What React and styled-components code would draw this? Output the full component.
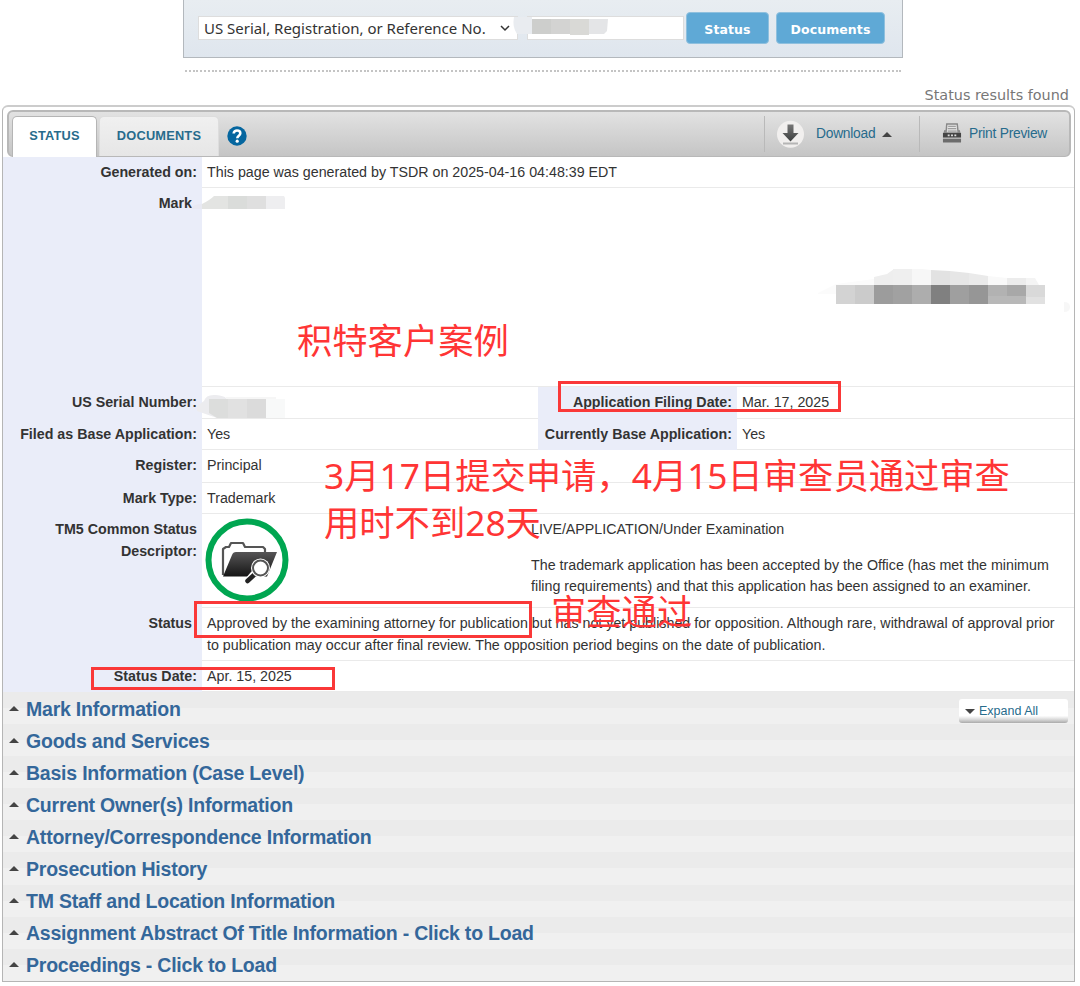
import React from 'react'
import styled, {createGlobalStyle} from 'styled-components'

const sections = [
    'Mark Information',
    'Goods and Services',
    'Basis Information (Case Level)',
    'Current Owner(s) Information',
    'Attorney/Correspondence Information',
    'Prosecution History',
    'TM Staff and Location Information',
    'Assignment Abstract Of Title Information - Click to Load',
    'Proceedings - Click to Load',
]

const App = () => {
    return (
        <Page>
            <GlobalStyle />
            <SearchBar>
                <Select>
                    <span>US Serial, Registration, or Reference No.</span>
                    <Chevron />
                </Select>
                <NumberInput />
                <SearchButton $width={83}>Status</SearchButton>
                <SearchButton $width={109} $gap={7}>Documents</SearchButton>
                <SearchMask />
            </SearchBar>
            <Dots />
            <Found>Status results found</Found>
            <Panel>
                <Toolbar>
                    <Tab $active>STATUS</Tab>
                    <Tab>DOCUMENTS</Tab>
                    <HelpIcon />
                    <Tools>
                        <Tool $width={155} $inset={13}>
                            <DownloadIcon />
                            <ToolText $gap={11}>Download</ToolText>
                            <Arrow $size={5} />
                        </Tool>
                        <Tool $width={150} $inset={23}>
                            <PrinterIcon />
                            <ToolText $gap={7}>Print Preview</ToolText>
                        </Tool>
                    </Tools>
                </Toolbar>
                <Row $height={31}>
                    <Label>Generated on:</Label>
                    <Value>This page was generated by TSDR on 2025-04-16 04:48:39 EDT</Value>
                </Row>
                <Row $height={199}>
                    <Label $cut>Mark</Label>
                    <Value />
                </Row>
                <Row $height={32} $split>
                    <Label>US Serial Number:</Label>
                    <Value />
                    <Label>Application Filing Date:</Label>
                    <Value>Mar. 17, 2025</Value>
                </Row>
                <Row $height={31} $split>
                    <Label>Filed as Base Application:</Label>
                    <Value>Yes</Value>
                    <Label>Currently Base Application:</Label>
                    <Value>Yes</Value>
                </Row>
                <Row $height={33}>
                    <Label>Register:</Label>
                    <Value>Principal</Value>
                </Row>
                <Row $height={31}>
                    <Label>Mark Type:</Label>
                    <Value>Trademark</Value>
                </Row>
                <Row $height={94}>
                    <Label>TM5 Common Status Descriptor:</Label>
                    <Descriptor>
                        <FolderIcon />
                        <DescriptorText>
                            <p>LIVE/APPLICATION/Under Examination</p>
                            <p>The trademark application has been accepted by the Office (has met the minimum<br />filing requirements) and that this application has been assigned to an examiner.</p>
                        </DescriptorText>
                    </Descriptor>
                </Row>
                <Row $height={53}>
                    <Label $cut>Status</Label>
                    <Value>Approved by the examining attorney for publication but has not yet published for opposition. Although rare, withdrawal of approval prior<br />to publication may occur after final review. The opposition period begins on the date of publication.</Value>
                </Row>
                <Row $height={31}>
                    <Label>Status Date:</Label>
                    <Value>Apr. 15, 2025</Value>
                </Row>
                <Sections>
                    {sections.map((title, i) => (
                        <Section key={title}>
                            <Arrow $size={5} />
                            <h2>{title}</h2>
                            {i === 0 && <ExpandAll><Arrow $down $size={5} />Expand All</ExpandAll>}
                        </Section>
                    ))}
                </Sections>
            </Panel>
            <MarkMask />
            <SerialMask />
            <ImageMask />
            <Frame $x={558} $y={381} $w={283} $h={31} />
            <Frame $x={194} $y={601} $w={338} $h={37} />
            <Frame $x={91} $y={667} $w={244} $h={23} />
            <Note $x={297} $y={317}>积特客户案例</Note>
            <Note $x={324} $y={452}>3月17日提交申请，4月15日审查员通过审查<br />用时不到28天</Note>
            <Note $x={551} $y={588}>审查通过</Note>
        </Page>
    )
}

export default App

const Chevron = () => (
    <svg width="10" height="8" viewBox="0 0 10 8" fill="none" stroke="#333" strokeWidth="1.5">
        <path d="M1 2l4 4 4-4" />
    </svg>
)

const HelpIcon = () => (
    <HelpSvg width="20" height="20" viewBox="0 0 20 20">
        <circle cx="10" cy="10" r="9.7" fill="#05669f" />
        <path d="M6.7 7.6C6.7 3.4 13.3 3.7 13.3 7.3C13.3 9.8 10.3 9.6 10.3 12.2" fill="none" stroke="#fff" strokeWidth="2.6" />
        <circle cx="10.2" cy="15.2" r="1.6" fill="#fff" />
    </HelpSvg>
)

const DownloadIcon = () => (
    <svg width="28" height="28" viewBox="0 0 28 28">
        <defs>
            <linearGradient id="down" x1="0" y1="0" x2="0" y2="1">
                <stop offset="0" stopColor="#777" />
                <stop offset="1" stopColor="#3c3f3f" />
            </linearGradient>
        </defs>
        <circle cx="13.5" cy="14.3" r="13.5" fill="#f1efee" />
        <path d="M10.5 4.500h6v8.500h5L13.500 21.500 5.500 13h5z" fill="url(#down)" />
        <path d="M6 23.500h15" stroke="#b5b5b5" strokeWidth="2" />
    </svg>
)

const PrinterIcon = () => (
    <PrinterSvg width="20" height="21" viewBox="0 0 21 21">
        <path d="M4.200 11L5 1.500h11L17 11z" fill="#e4e4e4" stroke="#888" strokeWidth="1.500" />
        <path d="M6.500 4h8M6 6.500h9M6 9h9.500" stroke="#888" strokeWidth="1" />
        <path d="M1 12l1.500-4H4v4zM20 12l-1.500-4H17v4z" fill="#888" />
        <path d="M1 11h19v5H1z" fill="#444" />
        <path d="M6 12.500h2v2H6zM9.500 12.500h2v2h-2zM13 12.500h2v2h-2z" fill="#ddd" />
        <path d="M1 16h19v1H1z" fill="#ccc" />
        <path d="M1 17h19v4H1z" fill="#6c6c6c" />
    </PrinterSvg>
)

const FolderIcon = () => (
    <FolderSvg width="84" height="84" viewBox="0 0 84 84">
        <defs>
            <linearGradient id="folder" x1="0" y1="0" x2="0" y2="1">
                <stop offset="0" stopColor="#565556" />
                <stop offset="1" stopColor="#151515" />
            </linearGradient>
        </defs>
        <circle cx="42" cy="42" r="38.500" fill="#fff" stroke="#00a651" strokeWidth="6" />
        <path d="M18 57V31l3-2h3l2-4h12l2 4h18l2 2v3" fill="none" stroke="#555" strokeWidth="2.200" strokeLinejoin="round" />
        <path d="M18 58.500L27 37Q28 34 31 34H72L62 58.500z" fill="url(#folder)" />
        <path d="M48 57L42.500 63.500" stroke="#fff" strokeWidth="7" strokeLinecap="round" />
        <path d="M49 57L42.500 63" stroke="#222" strokeWidth="4.500" strokeLinecap="round" />
        <circle cx="55.500" cy="50" r="9.500" fill="#fff" />
        <circle cx="55.500" cy="50" r="7.500" fill="#fff" stroke="#555" strokeWidth="2" />
    </FolderSvg>
)

// pixelated blocks over the private values
const SearchMask = () => (
    <Mask $x={512} $y={16} width="102" height="20" viewBox="0 0 102 20">
        <path d="M2 1H20V18H5Q0 11 2 1z" fill="#e9ecf0" />
        <path d="M20 3h19v15H20z" fill="#cdcecc" />
        <path d="M39 3h19v15H39z" fill="#d3d3d2" />
        <path d="M58 3h19v16H58z" fill="#d9d9d6" />
        <path d="M77 3h19l-1 12-3 3H77z" fill="#e4e5e7" />
    </Mask>
)

const MarkMask = () => (
    <Mask $x={191} $y={195} width="95" height="15" viewBox="0 0 95 15">
        <path d="M0 14Q2 9 11 9h7v5z" fill="#e8e9f2" />
        <path d="M11 14V9q8-4 12-8h14v13z" fill="#e3e4e2" />
        <path d="M37 1h19v13H37z" fill="#dadcda" />
        <path d="M56 1h19v13H56z" fill="#dfdfdf" />
        <path d="M75 1h18l1 2v11H75z" fill="#eeeef0" />
    </Mask>
)

const SerialMask = () => (
    <Mask $x={197} $y={394} width="90" height="26" viewBox="0 0 90 26">
        <path d="M0 12l7-5q2-7 12-6 8 1 10 3v20H20L0 17z" fill="#ececef" />
        <path d="M12 5h19v19H20l-8-5z" fill="#dcdddc" />
        <path d="M31 5h19v19H31z" fill="#e1e1e1" />
        <path d="M50 5h19v19H50z" fill="#dbdbdb" />
        <path d="M69 5h19v19H69z" fill="#f8f9f9" />
        <path d="M29 3h50v2H29z" fill="#f6f6f6" />
    </Mask>
)

const ImageMask = () => (
    <Mask $x={817} $y={268} width="253" height="46" viewBox="0 0 253 46">
        <path d="M1 25l18-9 38-5v15H1z" fill="#fbfbfb" />
        <path d="M57 17V9l13-3 7-5h-1v16z" fill="#eee" />
        <path d="M76 1h19v16H76z" fill="#efefef" />
        <path d="M95 1h10l9 1v15H95z" fill="#f7f7f7" />
        <path d="M114 2l19 1v14h-19z" fill="#e2e2e2" />
        <path d="M133 3l19 2v12h-19z" fill="#e6e6e6" />
        <path d="M152 5l19 3v9h-19z" fill="#eaeaea" />
        <path d="M171 8l19 2v7h-19z" fill="#f9f9f9" />
        <path d="M190 10h19v7h-19z" fill="#ececec" />
        <path d="M209 10h9l4 7h-13z" fill="#f4f4f4" />
        {['#d3d3d3', '#cbcbcb', '#9c9c9c', '#a1a1a1', '#adadad', '#808080', '#9f9f9f', '#969696', '#b2b2b2', '#a8a8a8', '#d9d9d9'].map((fill, i) => (
            <rect key={fill} x={19 + i * 19} y="17" width="19" height="19" fill={fill} />
        ))}
        <path d="M171 28h38v8h-38z" fill="#b8b8b8" />
        <path d="M209 29h19v7h-19z" fill="#e1e1e1" />
        <path d="M247 34q6 0 6 5t-6 5z" fill="#f7f7f7" />
    </Mask>
)

const GlobalStyle = createGlobalStyle`
    body {
        margin: 0;
        background: #fff;
    }
    * {
        box-sizing: border-box;
    }
`

const Page = styled.div`
    position: relative;
    width: 1080px;
    height: 986px;
    overflow: hidden;
    font-family: 'Liberation Sans', Arial, sans-serif;
    font-size: 14.25px;
    color: #333;
`

const SearchBar = styled.div`
    display: flex;
    align-items: flex-start;
    width: 720px;
    height: 58px;
    margin-left: 183px;
    padding: 12px 0 0 14px;
    background: linear-gradient(#e8edf1, #dfe6ee);
    border: 1px solid #b3b8bd;
    border-top: none;
`

const Select = styled.div`
    display: flex;
    align-items: center;
    justify-content: space-between;
    width: 320px;
    height: 24px;
    margin-top: 4px;
    padding: 0 7px 0 5px;
    background: #fff;
    border: 1px solid #ddd;
    font-family: 'Noto Sans', 'Open Sans', sans-serif;
    font-size: 15px;
    white-space: nowrap;
`

const NumberInput = styled.div`
    width: 157px;
    height: 24px;
    margin: 4px 2px 0 9px;
    background: #fff;
    border: 1px solid #ddd;
`

const SearchButton = styled.button`
    width: ${({$width}) => $width}px;
    height: 32px;
    margin-left: ${({$gap}) => $gap || 0}px;
    padding: 3px 0 0;
    background: #5fa9d6;
    color: #fff;
    border: 1px solid #8fc0de;
    border-radius: 4px;
    font-family: 'DejaVu Sans', Verdana, sans-serif;
    font-weight: 700;
    font-size: 12.5px;
    letter-spacing: .1px;
`

const Dots = styled.div`
    width: 717px;
    height: 2px;
    margin: 12px 0 0 185px;
    background: repeating-linear-gradient(90deg, #c4c4c4 0 2px, transparent 2px 3.8px);
`

const Found = styled.div`
    height: 33px;
    padding: 14px 11px 0 0;
    font-family: 'DejaVu Sans', Verdana, sans-serif;
    font-size: 14.4px;
    line-height: 18px;
    text-align: right;
    color: #777;
`

const Panel = styled.div`
    width: 1073px;
    height: 877px;
    margin-left: 2px;
    border: 1px solid #b5b5b5;
    border-top: 2px solid #ccc;
    border-radius: 6px 6px 0 0;
`

const Toolbar = styled.div`
    display: flex;
    align-items: flex-end;
    width: 1064px;
    height: 47px;
    margin: 3px 0 0 4px;
    padding-left: 3px;
    background: linear-gradient(#e2e2e2, #c5c5c5);
    border: 2px solid #b8b8b8;
    border-bottom-width: 1px;
    border-radius: 6px;
`

const Tab = styled.div`
    width: ${({$active}) => $active ? 85 : 120}px;
    height: ${({$active}) => $active ? 41 : 40}px;
    margin-right: 2px;
    padding-top: 11px;
    margin-bottom: ${({$active}) => $active ? -1 : 0}px;
    background: ${({$active}) => $active ? '#fff' : 'linear-gradient(#f0f0f0, #e6e6e6)'};
    border: 1px solid ${({$active}) => $active ? '#b5b5b5' : '#ddd'};
    border-bottom: none;
    border-radius: 5px 5px 0 0;
    color: #276b8c;
    font-weight: 700;
    font-size: 12.8px;
    letter-spacing: .2px;
    text-align: center;
`

const HelpSvg = styled.svg`
    align-self: center;
    margin: 3px 0 0 6px;
`

const PrinterSvg = styled.svg`
    margin-bottom: 4px;
`

const FolderSvg = styled.svg`
    flex: none;
    margin-top: -1px;
`

const Tools = styled.div`
    display: flex;
    align-self: center;
    margin-left: auto;
`

const Tool = styled.div`
    display: flex;
    align-items: center;
    width: ${({$width}) => $width}px;
    height: 36px;
    padding-left: ${({$inset}) => $inset - 1}px;
    border-left: 1px solid #b9b9b9;
    color: #276b8c;
`

const ToolText = styled.span`
    margin: 0 7px 2px ${({$gap}) => $gap}px;
    font-size: 13.8px;
    letter-spacing: -.25px;
    white-space: nowrap;
`

const Arrow = styled.i`
    flex: none;
    border: ${({$size}) => $size}px solid transparent;
    border-${({$down}) => $down ? 'top' : 'bottom'}-color: #444;
    border-${({$down}) => $down ? 'bottom' : 'top'}-width: 0;
`

const Row = styled.div`
    display: grid;
    grid-template-columns: 199px ${({$split}) => $split ? '336px 199px 1fr' : '1fr'};
    grid-template-rows: 100%;
    height: ${({$height}) => $height}px;
    line-height: 21.500px;
`

const Label = styled.div`
    padding: 5px ${({$cut}) => $cut ? 10 : 5}px 0 0;
    background: #eaedf9;
    font-size: 14.25px;
    font-weight: 700;
    text-align: right;
`

const Value = styled.div`
    padding: 5px 0 0 5px;
    border-bottom: 1px solid #eaeaea;
    white-space: nowrap;
`

const Descriptor = styled(Value)`
    display: flex;
    align-items: flex-start;
    padding-left: 3px;
`

const DescriptorText = styled.div`
    margin-left: 242px;
    p {
        margin: 0;
    }
    p + p {
        margin-top: 14px;
    }
`

const Sections = styled.div`
    background: #f0f0f0;
`

const Section = styled.div`
    display: flex;
    align-items: center;
    height: 32.100px;
    padding-left: 6px;
    background: linear-gradient(#ebebeb 50%, #f0f0f0 50%);
    color: #34679a;
    h2 {
        margin: 1px 0 0 7px;
        font-size: 19.500px;
        line-height: 24px;
        letter-spacing: -.22px;
        white-space: nowrap;
    }
`

const ExpandAll = styled.div`
    display: flex;
    align-items: center;
    gap: 4px;
    width: 109px;
    height: 24px;
    margin: 5px 6px 0 auto;
    padding: 1px 0 0 6px;
    background: linear-gradient(#fff 70%, #ddd 84%, #aaa);
    border-radius: 3px;
    color: #276b8c;
    font-size: 12.500px;
`

const Mask = styled.svg`
    position: absolute;
    left: ${({$x}) => $x}px;
    top: ${({$y}) => $y}px;
`

const Frame = styled.div`
    position: absolute;
    left: ${({$x}) => $x}px;
    top: ${({$y}) => $y}px;
    width: ${({$w}) => $w}px;
    height: ${({$h}) => $h}px;
    border: 3px solid #fa3838;
`

const Note = styled.div`
    position: absolute;
    left: ${({$x}) => $x}px;
    top: ${({$y}) => $y}px;
    color: #ff3535;
    font-family: 'Noto Sans', 'Noto Sans CJK SC', sans-serif;
    font-size: 35.300px;
    line-height: 47px;
    white-space: nowrap;
`
